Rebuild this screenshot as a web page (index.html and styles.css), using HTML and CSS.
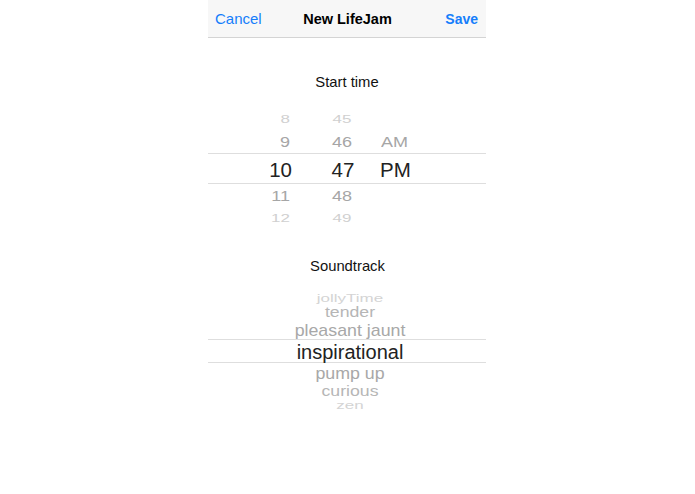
FILE: index.html
```html
<!DOCTYPE html>
<html>
<head>
<meta charset="utf-8">
<link rel="stylesheet" href="styles.css">
</head>
<body>
<div class="phone">
  <div class="nav">
    <span class="nav-btn cancel">Cancel</span>
    <span class="nav-title">New LifeJam</span>
    <span class="nav-btn save">Save</span>
  </div>

  <div class="label label-start">Start time</div>
  <div class="picker time-picker">
    <div class="trow r-far1"><span class="hr">8</span><span class="mn">45</span><span class="ap"></span></div>
    <div class="trow r-near1"><span class="hr">9</span><span class="mn">46</span><span class="ap">AM</span></div>
    <div class="trow r-sel"><span class="hr">10</span><span class="mn">47</span><span class="ap">PM</span></div>
    <div class="trow r-near2"><span class="hr">11</span><span class="mn">48</span><span class="ap"></span></div>
    <div class="trow r-far2"><span class="hr">12</span><span class="mn">49</span><span class="ap"></span></div>
  </div>

  <div class="label label-sound">Soundtrack</div>
  <div class="picker sound-picker">
    <div class="srow s3"><span>jollyTime</span></div>
    <div class="srow s2"><span>tender</span></div>
    <div class="srow s1"><span>pleasant jaunt</span></div>
    <div class="srow s-sel"><span>inspirational</span></div>
    <div class="srow s1b"><span>pump up</span></div>
    <div class="srow s2b"><span>curious</span></div>
    <div class="srow s3b"><span>zen</span></div>
  </div>
</div>
</body>
</html>
```

FILE: styles.css
```css
html, body {
  margin: 0;
  padding: 0;
  background: #ffffff;
}
body {
  font-family: "Liberation Sans", Arial, Helvetica, sans-serif;
  color: #111;
}
.phone {
  width: 278px;
  margin: 0 0 0 208px;
  display: flex;
  flex-direction: column;
  background: #fff;
}
.nav {
  height: 38px;
  box-sizing: border-box;
  background: #f7f7f7;
  border-bottom: 1px solid #d4d4d4;
  display: flex;
  align-items: center;
  justify-content: space-between;
  padding: 0 8px 0 7px;
  position: relative;
}
.nav-btn {
  color: #157efb;
  font-size: 15px;
}
.save {
  font-weight: bold;
  font-size: 14px;
}
.nav-title {
  position: absolute;
  left: 1px;
  right: 0;
  text-align: center;
  font-weight: bold;
  font-size: 14.5px;
  color: #000;
  pointer-events: none;
}
.label {
  text-align: center;
  font-size: 14.8px;
  line-height: 18px;
  height: 18px;
  color: #111;
}
.label-start {
  margin-top: 35px;
}
.label-sound {
  margin-top: 29px;
  padding-left: 1px;
}
.picker {
  display: flex;
  flex-direction: column;
}
.time-picker {
  margin-top: 17px;
}
.trow {
  display: flex;
  align-items: center;
  color: #a6a6a6;
  font-size: 18px;
  box-sizing: border-box;
}
.trow span {
  display: block;
}
.hr {
  width: 82px;
  margin-right: 2px;
  text-align: right;
}
.mn {
  width: 50px;
  margin-left: 25px;
  text-align: center;
}
.ap {
  margin-left: 14px;
}
.r-sel .hr {
  width: 84px;
  margin-right: 0;
}
.r-sel .mn {
  margin-left: 26px;
}
.r-sel .ap {
  margin-left: 12px;
}
.r-far1 { height: 22px; color: #d0d0d0; font-size: 17px; padding-top: 2px; }
.r-far1 span, .r-far2 span { transform: scaleY(0.62); }
.r-near1 { height: 24px; border-bottom: 1px solid #dedede; padding-top: 1px; }
.r-near1 span, .r-near2 span { transform: scaleY(0.86); }
.r-sel {
  height: 30px;
  color: #222;
  font-size: 20.5px;
  border-bottom: 1px solid #dedede;
  padding-top: 2px;
}
.r-near2 { height: 24px; padding-top: 1px; }
.r-far2 { height: 20px; color: #d0d0d0; font-size: 17px; padding-top: 1px; }

.sound-picker {
  margin-top: 17px;
}
.srow {
  display: flex;
  justify-content: center;
  align-items: center;
  font-size: 18px;
  color: #a8a8a8;
  box-sizing: border-box;
  padding-top: 1px;
  padding-left: 6px;
}
.srow span {
  display: block;
}
.s3, .s3b { height: 12px; color: #d4d4d4; font-size: 17px; }
.s3 span, .s3b span { transform: scaleY(0.66); }
.s2, .s2b { height: 16px; color: #b6b6b6; font-size: 17.7px; }
.s2 span, .s2b span { transform: scaleY(0.82); }
.s1, .s1b { height: 20px; font-size: 17.8px; }
.s1 span, .s1b span { transform: scaleY(0.93); }
.s1 { border-bottom: 1px solid #dedede; }
.s-sel {
  height: 23px;
  font-size: 20px;
  color: #222;
  border-bottom: 1px solid #dedede;
  padding-top: 2px;
}
```
